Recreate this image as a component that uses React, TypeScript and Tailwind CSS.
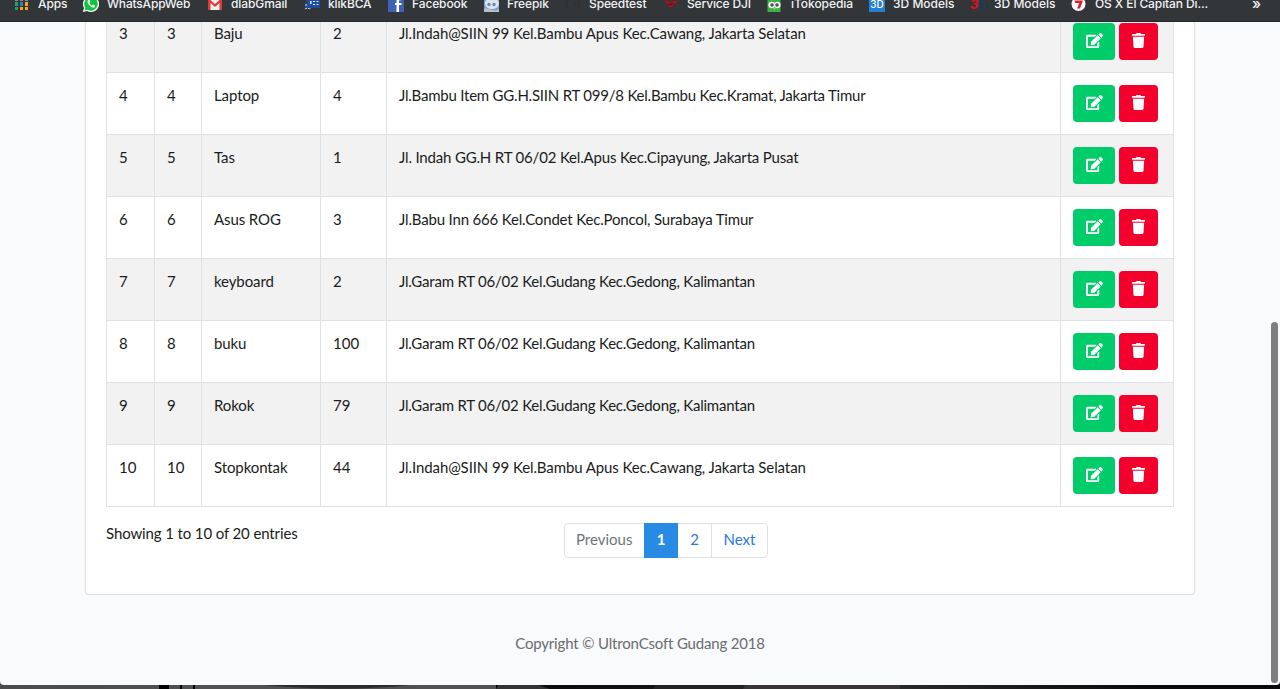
import type { ReactNode } from "react";
import { FaEdit, FaTrash } from "react-icons/fa";

type Bookmark = { label: string; item: string; tracking: string; icon: ReactNode };

const bookmarks: Bookmark[] = [
  {
    label: "Apps",
    item: "w-[68px]",
    tracking: "tracking-[-0.1px]",
    icon: (
      <svg width="16" height="16" viewBox="0 0 16 16">
        <path d="M1 2h3v3H1zM6 2h3v3H6zM11 2h3v3h-3z" fill="#8a8d8f" />
        <path d="M1 6h3v4H1zM1 11h3v3H1z" fill="#1fa463" />
        <path d="M6 6h3v4H6z" fill="#2a7de1" />
        <path d="M11 6h3v4h-3zM6 11h3v3H6zM11 11h3v3h-3z" fill="#f9a51a" />
      </svg>
    ),
  },
  {
    label: "WhatsAppWeb",
    item: "w-[125px]",
    tracking: "pl-px tracking-[-0.18px]",
    icon: (
      <svg width="17" height="16" viewBox="0 0 17 16">
        <path d="M9 0a8 8 0 1 1-3.800 15L0.800 16 2 12A8 8 0 0 1 9 0z" fill="#fff" />
        <path d="M9 1.200a6.800 6.800 0 1 1-3.600 12.600L2.600 14.400 3.400 11.800A6.800 6.800 0 0 1 9 1.200z" fill="#10c63f" />
        <path d="M6.500 4c-1.500.8-1.300 2.800.6 5s4.300 3.400 5.700 1.900l.2-1.300-2-1-1.100 1.100C8.700 9 8 8.200 7.500 7l.8-.9L7.500 4z" fill="#fff" />
      </svg>
    ),
  },
  {
    label: "dlabGmail",
    item: "w-[97px]",
    tracking: "tracking-[-0.1px]",
    icon: (
      <svg width="16" height="16" viewBox="0 0 16 16">
        <path d="M1 2h14v12H1z" fill="#f3efef" />
        <path d="M1 14V2l7 6 7-6v12h-2.500V7L8 11 3.500 7v7z" fill="#dc3b35" />
      </svg>
    ),
  },
  {
    label: "klikBCA",
    item: "w-[84px]",
    tracking: "tracking-[-0.14px]",
    icon: (
      <svg width="16" height="16" viewBox="0 0 16 16">
        <path d="M3 3h13v9H1z" fill="#1c4da1" />
        <path d="M6 5h1.500v3H6zM9 5h2v1H9zM12.500 5h2v1h-2zM9 8h2v1H9zM12.500 8h2v1h-2z" fill="#e8eef9" />
        <path d="M2 8v3M1 13c3-2 4 1 6-1" stroke="#dce5f6" strokeDasharray="2 1" fill="none" />
      </svg>
    ),
  },
  {
    label: "Facebook",
    item: "w-[95px]",
    tracking: "tracking-[-0.12px]",
    icon: (
      <svg width="16" height="16" viewBox="0 0 16 16">
        <path d="M0 0h16v16H0z" fill="#4062b5" />
        <path d="M8.500 16V9H7V7h1.500V5c0-2 1.500-3 4.500-2.600v2c-2-.2-2 .1-2 2.600h2.500v2H11v7z" fill="#fff" />
      </svg>
    ),
  },
  {
    label: "Freepik",
    item: "w-[82px]",
    tracking: "tracking-[-0.08px]",
    icon: (
      <svg width="16" height="16" viewBox="0 0 16 16">
        <path d="M1 0h15v16H1z" fill="#7d9dcc" />
        <ellipse cx="9" cy="7.500" rx="7" ry="5.500" fill="#dce4ed" />
        <circle cx="6" cy="8.500" r="1.700" fill="#6b88b9" />
        <circle cx="11" cy="8.500" r="1.700" fill="#6b88b9" />
        <path d="M1 13c4-2 10 4 15 0v3H1z" fill="#b9c1c9" />
      </svg>
    ),
  },
  {
    label: "Speedtest",
    item: "w-[98px]",
    tracking: "tracking-[-0.12px]",
    icon: (
      <svg width="16" height="16" viewBox="0 0 16 16">
        <path d="M4 13a6.500 6.500 0 1 1 8 0M8 9l3-3" stroke="#2e3235" strokeWidth="1.500" fill="none" />
      </svg>
    ),
  },
  {
    label: "Service DJI",
    item: "w-[104px]",
    tracking: "tracking-[-0.16px]",
    icon: (
      <svg width="16" height="16" viewBox="0 0 16 16">
        <path d="M1 5h4.500l1 1 1.500.5L9.500 6l1-1H15l-2 2-2.500 1-1 3h-3l-1-3L3 7z" fill="#b50d1b" />
        <path d="M6 7l2 1 2-1-1 2H7z" fill="#3a0f16" />
      </svg>
    ),
  },
  {
    label: "iTokopedia",
    item: "w-[102px]",
    tracking: "tracking-[-0.05px]",
    icon: (
      <svg width="16" height="16" viewBox="0 0 16 16">
        <path d="M.5 3h13v13H.5z" fill="#36b44a" />
        <circle cx="4.600" cy="9" r="3.200" fill="#f4f6ef" />
        <circle cx="10.400" cy="9" r="3.200" fill="#f4f6ef" />
        <circle cx="5" cy="9" r="1.800" fill="#4e5750" />
        <circle cx="10" cy="9" r="1.800" fill="#4e5750" />
        <path d="M6 12h3l-1.500 2z" fill="#e5ae33" />
      </svg>
    ),
  },
  {
    label: "3D Models",
    item: "w-[101px]",
    tracking: "tracking-normal",
    icon: (
      <span className="flex h-4 w-4 items-center justify-center bg-[#2480d4] text-[10px] font-medium text-white">3D</span>
    ),
  },
  {
    label: "3D Models",
    item: "w-[101px]",
    tracking: "tracking-normal",
    icon: (
      <span className="flex h-4 w-4 items-center text-[13px] font-extrabold">
        <span className="text-[#d7141a] italic">3</span>
        <span className="pt-1 text-[12px] font-medium text-[#173b66]">D</span>
      </span>
    ),
  },
  {
    label: "OS X El Capitan Di...",
    item: "w-[181px]",
    tracking: "tracking-[-0.1px]",
    icon: (
      <svg width="16" height="16" viewBox="0 0 16 16">
        <circle cx="7.500" cy="8" r="7" fill="#fff" />
        <path d="M3.500 4.500h8.500l-3 8H6l2.300-5.500H4z" fill="#e0202a" />
      </svg>
    ),
  },
];

type Row = { no: number; name: string; qty: number; address: string; tracking: string };

const rows: Row[] = [
  { no: 3, name: "Baju", qty: 2, address: "Jl.Indah@SIIN 99 Kel.Bambu Apus Kec.Cawang, Jakarta Selatan", tracking: "tracking-[-0.1px]" },
  { no: 4, name: "Laptop", qty: 4, address: "Jl.Bambu Item GG.H.SIIN RT 099/8 Kel.Bambu Kec.Kramat, Jakarta Timur", tracking: "tracking-[-0.22px]" },
  { no: 5, name: "Tas", qty: 1, address: "Jl. Indah GG.H RT 06/02 Kel.Apus Kec.Cipayung, Jakarta Pusat", tracking: "tracking-[-0.175px]" },
  { no: 6, name: "Asus ROG", qty: 3, address: "Jl.Babu Inn 666 Kel.Condet Kec.Poncol, Surabaya Timur", tracking: "tracking-[-0.17px]" },
  { no: 7, name: "keyboard", qty: 2, address: "Jl.Garam RT 06/02 Kel.Gudang Kec.Gedong, Kalimantan", tracking: "tracking-[-0.21px]" },
  { no: 8, name: "buku", qty: 100, address: "Jl.Garam RT 06/02 Kel.Gudang Kec.Gedong, Kalimantan", tracking: "tracking-[-0.21px]" },
  { no: 9, name: "Rokok", qty: 79, address: "Jl.Garam RT 06/02 Kel.Gudang Kec.Gedong, Kalimantan", tracking: "tracking-[-0.21px]" },
  { no: 10, name: "Stopkontak", qty: 44, address: "Jl.Indah@SIIN 99 Kel.Bambu Apus Kec.Cawang, Jakarta Selatan", tracking: "tracking-[-0.1px]" },
];

function BookmarksBar() {
  return (
    <div className="h-[22px] shrink-0 overflow-hidden border-b border-[#24282a] bg-[#323639] font-['Inter',sans-serif] text-[12px] font-medium text-[#f1f2f3]">
      <div className="-mt-1 flex h-4 items-center pl-[14px]">
        {bookmarks.map((b, i) => (
          <div key={i} className={`flex h-4 shrink-0 items-center whitespace-nowrap ${b.item}`}>
            <span className="flex w-6 shrink-0">{b.icon}</span>
            <span className={b.tracking}>{b.label}</span>
          </div>
        ))}
        <span className="text-[15px]">»</span>
      </div>
    </div>
  );
}

function TableRow({ row }: { row: Row }) {
  const cell = "border-r border-[#dee2e6] px-3 pt-[11px]";
  return (
    <div className="grid h-[62px] grid-cols-[48px_47px_119px_66px_674px_113px] border-b border-[#dee2e6] odd:bg-[#f2f2f2]">
      <div className={cell}>{row.no}</div>
      <div className={cell}>{row.no}</div>
      <div className={`${cell} tracking-[-0.1px]`}>{row.name}</div>
      <div className={cell}>{row.qty}</div>
      <div className={`${cell} ${row.tracking}`}>{row.address}</div>
      <div className="flex gap-1 border-r border-[#dee2e6] px-3 pt-3">
        <button className="flex h-[37px] w-[42px] items-center justify-center rounded bg-[#00cc6a] pb-0.5 text-white">
          <FaEdit size={17} />
        </button>
        <button className="flex h-[37px] w-[39px] items-center justify-center rounded bg-[#f4002c] pb-[3px] text-white">
          <FaTrash size={15} />
        </button>
      </div>
    </div>
  );
}

export default function App() {
  return (
    <div className="flex h-[689px] w-[1280px] flex-col overflow-hidden bg-[linear-gradient(90deg,#4a4a4a,#555_25%,#3a3a3a_38%,#0c0c0c_43%,#111_50%,#333_62%,#222_75%,#0a0a0a_90%)] font-['Lato',sans-serif] text-[15px] leading-[22px] text-[#191c20]">
      <div className="relative flex h-[685px] flex-col overflow-hidden rounded-b bg-[#f8fafc]">
        <BookmarksBar />
        <main className="flex flex-1 flex-col overflow-hidden">
          <section className="mx-[85px] h-[573px] w-[1110px] shrink-0 rounded-b border border-t-0 border-[#dfdfdf] bg-white px-5">
            <div className="-mt-[11px] border-l border-[#dee2e6]">
              {rows.map((row) => (
                <TableRow key={row.no} row={row} />
              ))}
            </div>
            <div className="flex pt-4">
              <p className="-mt-px w-[458px] tracking-[-0.12px]">Showing 1 to 10 of 20 entries</p>
              <nav className="flex h-[35px] rounded border border-[#dee2e6] leading-[31px] text-[#2779e2]">
                <span className="w-[79px] pl-[11px] text-[#6c757d]">Previous</span>
                <span className="-my-px w-[34px] bg-[#288be3] pt-px text-center font-bold text-white">1</span>
                <span className="w-[34px] border-r border-[#dee2e6] text-center">2</span>
                <span className="w-[55px] text-center">Next</span>
              </nav>
            </div>
          </section>
          <footer className="pt-[37px] text-center tracking-[-0.18px] text-[#6c6c6c]">Copyright © UltronCsoft Gudang 2018</footer>
        </main>
        <div className="absolute top-[322px] right-[2px] h-[361px] w-[7px] rounded-full bg-[#7d7e80]" />
      </div>
      <svg width="1280" height="4" viewBox="0 0 1280 4">
        <path d="M159 0h10v4h-10zM180 0h2v4h-2zM193 0h2v4h-2zM496 0h2v4h-2z" fill="#000" />
        <path d="M195 0h301v4H195z" fill="#505050" />
        <path d="M265 0h145c-50 5-90 5-145 0z" fill="#2b2b2b" />
        <path d="M498 0h40l12 4h-54z" fill="#333" />
        <path d="M655 0h90l-2 4h-90z" fill="#222" />
        <path d="M745 0h155v4H743z" fill="#383536" />
      </svg>
    </div>
  );
}
